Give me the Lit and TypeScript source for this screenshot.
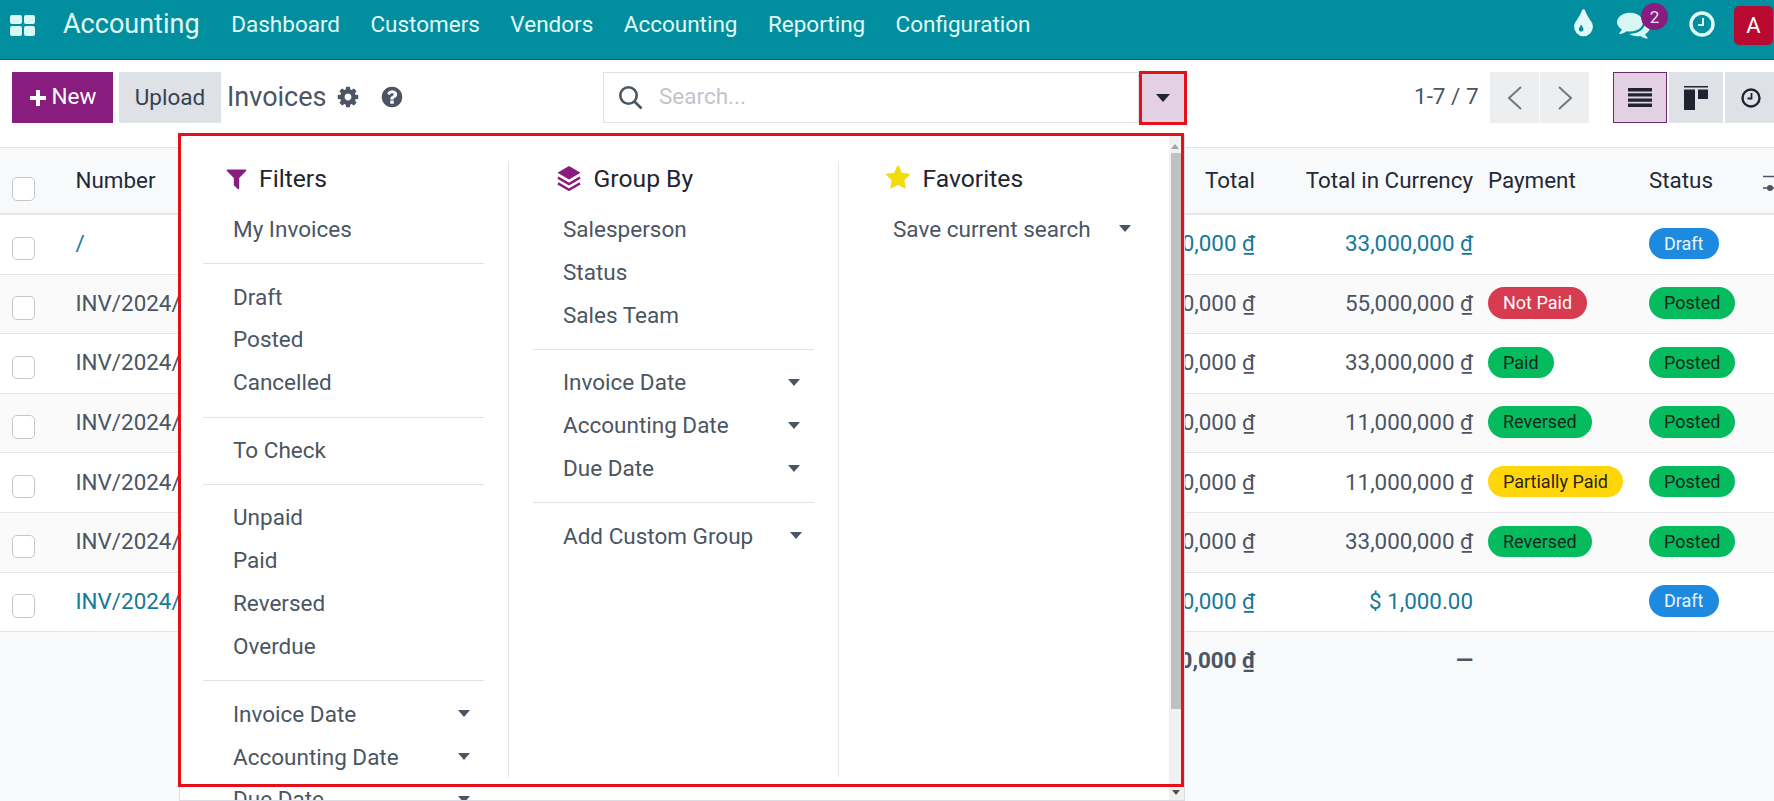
import { LitElement, html, css } from "lit";
import { customElement } from "lit/decorators.js";

const FA = (d: string, cls: string, box = "0 0 1792 1792") =>
  html`<svg class=${cls} viewBox=${box} fill="currentColor"><path d=${d}></path></svg>`;

const GEAR = "M1152 896q0-106-75-181t-181-75-181 75-75 181 75 181 181 75 181-75 75-181zm512-109v222q0 12-8 23t-20 13l-185 28q-19 54-39 91 35 50 107 138 10 12 10 25t-9 23q-27 37-99 108t-94 71q-12 0-26-9l-138-108q-44 23-91 38-16 136-29 186-7 28-36 28h-222q-14 0-24.5-8.5t-11.5-21.5l-28-184q-49-16-90-37l-141 107q-10 9-25 9-14 0-25-11-126-114-165-168-7-10-7-23 0-12 8-23 15-21 51-66.5t54-70.5q-27-50-41-99l-183-27q-13-2-21-12.5t-8-23.5v-222q0-12 8-23t19-13l186-28q14-46 39-92-40-57-107-138-10-12-10-24 0-10 9-23 26-36 98.5-107.5t94.5-71.5q13 0 26 10l138 107q44-23 91-38 16-136 29-186 7-28 36-28h222q14 0 24.5 8.5t11.5 21.5l28 184q49 16 90 37l142-107q9-9 24-9 13 0 25 10 129 119 165 170 7 8 7 22 0 12-8 23-15 21-51 66.5t-54 70.5q26 50 41 98l183 28q13 2 21 12.5t8 23.5z";
const QUESTION = "M1024 1376v-192q0-14-9-23t-23-9h-192q-14 0-23 9t-9 23v192q0 14 9 23t23 9h192q14 0 23-9t9-23zm256-672q0-88-55.5-163t-138.5-116-170-41q-243 0-371 213-15 24 8 42l132 100q7 6 19 6 16 0 25-12 53-68 86-92 34-24 86-24 48 0 85.5 26t37.5 59q0 38-20 61t-68 45q-63 28-115.5 86.5t-52.5 125.5v36q0 14 9 23t23 9h192q14 0 23-9t9-23q0-19 21.5-49.5t54.5-49.5q32-18 49-28.5t46-35 44.5-48 28-60.5 12.5-81zm384 192q0 209-103 385.5t-279.5 279.5-385.5 103-385.5-103-279.5-279.5-103-385.5 103-385.5 279.5-279.5 385.5-103 385.5 103 279.5 279.5 103 385.5z";
const FILTER = "M1595 295q17 41-14 70l-493 493v742q0 42-39 59-13 5-25 5-27 0-45-19l-256-256q-19-19-19-45v-486l-493-493q-31-29-14-70 17-39 59-39h1280q42 0 59 39z";
const STAR = "M1728 647q0 22-26 48l-363 354 86 500q1 7 1 20 0 21-10.5 35.5t-30.5 14.5q-19 0-40-12l-449-236-449 236q-22 12-40 12-21 0-31.5-14.5t-10.5-35.5q0-6 2-20l86-500-364-354q-25-27-25-48 0-37 56-46l502-73 225-455q19-41 49-41t49 41l225 455 502 73q56 9 56 46z";
const TINT = "M896 1152q0-36-20-69-1-1-15.5-22.5t-25.5-38-25-44-21-50.5q-4-16-21-16t-21 16q-7 23-21 50.5t-25 44-25.5 38-15.5 22.5q-20 33-20 69 0 53 37.5 90.5t90.5 37.5 90.5-37.5 37.5-90.5zm512-128q0 212-150 362t-362 150-362-150-150-362q0-145 81-275 6-9 62.5-90.5t101-151 99.5-178 83-201.5q9-30 34-47t51-17 51.5 17 33.5 47q28 93 83 201.5t99.5 178 101 151 62.5 90.5q81 127 81 275z";
const COMMENTS = "M1408 768q0 139-94 257t-256.5 186.5-353.5 68.5q-86 0-176-16-124 88-278 128-36 9-86 16h-3q-11 0-20.5-8t-11.5-21q-1-3-1-6.5t.5-6.5 2-6l2.5-5 3.5-5.5 4-5 4.5-5 4-4.5q5-6 23-25t26-29.5 22.5-29 25-38.5 20.5-44q-124-72-195-177t-71-224q0-139 94-257t256.5-186.5 353.5-68.5 353.5 68.5 256.5 186.5 94 257zm384 256q0 120-71 224.5t-195 176.5q10 24 20.5 44t25 38.5 22.5 29 26 29.5 23 25q1 1 4 4.5t4.500 5 4 5 3.5 5.500l2.5 5 2 6 .5 6.500-1 6.500q-3 14-13 22t-22 7q-50-7-86-16-154-40-278-128-90 16-176 16-271 0-472-132 58 4 88 4 161 0 309-45t264-129q125-92 192-212t67-254q0-77-23-152 129 71 204 178t75 230z";

type Row = { num: string; total: string; cur: string; pay?: [string, string]; status: [string, string]; link?: boolean };
const ROWS: Row[] = [
  { num: "/", total: "33,000,000 ₫", cur: "33,000,000 ₫", status: ["Draft", "blue"], link: true },
  { num: "INV/2024/00006", total: "55,000,000 ₫", cur: "55,000,000 ₫", pay: ["Not Paid", "red"], status: ["Posted", "green"] },
  { num: "INV/2024/00005", total: "33,000,000 ₫", cur: "33,000,000 ₫", pay: ["Paid", "green"], status: ["Posted", "green"] },
  { num: "INV/2024/00004", total: "11,000,000 ₫", cur: "11,000,000 ₫", pay: ["Reversed", "green"], status: ["Posted", "green"] },
  { num: "INV/2024/00003", total: "11,000,000 ₫", cur: "11,000,000 ₫", pay: ["Partially Paid", "yellow"], status: ["Posted", "green"] },
  { num: "INV/2024/00002", total: "33,000,000 ₫", cur: "33,000,000 ₫", pay: ["Reversed", "green"], status: ["Posted", "green"] },
  { num: "INV/2024/00001", total: "25,000,000 ₫", cur: "$ 1,000.00", status: ["Draft", "blue"], link: true },
];

type Item = { t: string; caret?: boolean } | null;
const FILTERS: Item[] = [
  { t: "My Invoices" }, null, { t: "Draft" }, { t: "Posted" }, { t: "Cancelled" }, null, { t: "To Check" }, null,
  { t: "Unpaid" }, { t: "Paid" }, { t: "Reversed" }, { t: "Overdue" }, null,
  { t: "Invoice Date", caret: true }, { t: "Accounting Date", caret: true }, { t: "Due Date", caret: true },
];
const GROUPS: Item[] = [
  { t: "Salesperson" }, { t: "Status" }, { t: "Sales Team" }, null,
  { t: "Invoice Date", caret: true }, { t: "Accounting Date", caret: true }, { t: "Due Date", caret: true }, null,
  { t: "Add Custom Group", caret: true },
];
const FAVS: Item[] = [{ t: "Save current search", caret: true }];

@customElement("app-root")
export class AppRoot extends LitElement {
  static styles = css`
    :host { display: block; position: relative; width: 1774px; height: 801px; overflow: hidden; background: #f8f9fb;
      font-family: Roboto, "Liberation Sans", sans-serif; font-size: 22.5px; color: #4b5563; }
    svg { display: block; flex: none; }

    .nav { height: 48px; padding-bottom: 11px; border-bottom: 1px solid #05626d; background: #018e9e; display: flex; align-items: center; color: #e2faf7; }
    .apps { display: grid; grid-template-columns: 11.5px 11.5px; gap: 2px; margin: 0 0 -2px 10px; }
    .apps i { height: 9.5px; background: #d9f7f5; border-radius: 2px; }
    .brand { font-size: 27px; margin: 0 16.5px 0 28px; }
    .menu { padding: 0 15.2px; }
    .sys { margin-left: auto; display: flex; align-items: center; position: relative; height: 59px; margin-bottom: -11px; width: 198px; }
    .tint { width: 33px; height: 33px; position: absolute; left: -9px; top: 8px; color: #e2faf7; }
    .chat { width: 33px; height: 33px; position: absolute; left: 41px; top: 8px; color: #d9f7f5; }
    .badge { position: absolute; left: 65px; top: 3px; width: 27px; height: 27px; border-radius: 50%; background: #881c7f;
      color: #e9dff0; font-size: 17px; display: flex; align-items: center; justify-content: center; }
    .nclock { width: 26px; height: 26px; position: absolute; left: 113px; top: 11px; color: #e2faf7; }
    .avatar { position: absolute; left: 158px; top: 6px; width: 39px; height: 39px; background: #b80a31; border-radius: 5px;
      color: #fff; font-size: 22px; display: flex; align-items: center; justify-content: center; }

    .cp { height: 87px; box-sizing: border-box; background: #fff; display: grid; grid-template-columns: 603px 583px 1fr; padding-top: 12px; }
    .cp-left { display: flex; align-items: flex-start; padding-left: 12px; }
    .btn { height: 51px; display: flex; align-items: center; justify-content: center; box-sizing: border-box; }
    .new { width: 101px; background: #881c7f; color: #fff; gap: 5px; }
    .new span { margin-bottom: 3px; }
    .plus { width: 18px; height: 18px; }
    .upload { width: 102px; background: #dee2e6; color: #374151; margin-left: 6px; padding-bottom: 2px; }
    .title { font-size: 27px; color: #4b5563; margin-left: 6px; height: 51px; line-height: 50px; }
    .gear { width: 24px; height: 24px; margin: 13px 0 0 10px; color: #4b5563; }
    .help { width: 24px; height: 24px; margin: 13px 0 0 20px; color: #4b5563; }

    .search { display: flex; height: 51px; }
    .sbox { flex: 1; border: 1px solid #dee2e6; display: flex; align-items: center; box-sizing: border-box; color: #c0c5cc; }
    .sbox span { margin-bottom: 3px; }
    .sicon { width: 25px; height: 25px; margin: 0 16px 0 14px; color: #4b5563; }
    .sbtn { width: 47px; background: #e3d0e2; display: flex; align-items: center; justify-content: center; }

    .caret { width: 0; height: 0; border-left: 6px solid transparent; border-right: 6px solid transparent; border-top: 7px solid #4b5563; flex: none; }
    .caret.big { border-left-width: 7px; border-right-width: 7px; border-top: 8px solid #1f2430; }

    .cp-right { display: flex; align-items: flex-start; padding-left: 228px; white-space: nowrap; }
    .pager { width: 76px; height: 51px; line-height: 49px; flex: none; }
    .pbtn { width: 49px; height: 51px; background: #eceef0; display: flex; align-items: center; justify-content: center; flex: none; color: #777; }
    .pbtn + .pbtn { margin-left: 1px; }
    .vbtn { width: 54px; height: 51px; background: #dee2e6; display: flex; align-items: center; justify-content: center; box-sizing: border-box; flex: none; margin-left: 2px; color: #1f2430; }
    .vbtn.on { background: #e3d0e2; border: 1px solid #6b2a6a; margin-left: 24px; }
    .vbtn.clock { justify-content: flex-start; padding-left: 16px; }

    .thead, .row, .tfoot { display: grid; grid-template-columns: 75.5px 1fr 155.5px 218px 161px 140px; align-items: center; font-size: 22.4px; }
    .thead { height: 68px; box-sizing: border-box; border-top: 1px solid #e1e4e8; border-bottom: 2px solid #e5e7eb; background: #f8f9fb; color: #1f2937; padding-bottom: 2px; }
    .row { height: 59.6px; box-sizing: border-box; border-bottom: 1px solid #e3e5e8; background: #fff; padding-bottom: 2px; }
    .row.alt { background: #fafafa; }
    .row.link { color: #15799a; }
    .tfoot { height: 58px; font-weight: 700; padding-bottom: 2px; box-sizing: border-box; }
    .cb { width: 23.5px; height: 23.5px; border: 1px solid #c3c7cc; border-radius: 5px; background: #fff; box-sizing: border-box; margin: 10px 0 0 11.5px; }
    .thead .cb { margin-top: 18.5px; }
    .r { text-align: right; white-space: nowrap; }
    .pad { padding-left: 15px; }
    .adjust { position: absolute; left: 1762px; top: 175px; width: 14px; height: 18px; color: #4b5563; }
    .pill { display: inline-block; height: 31.5px; line-height: 31px; padding: 0 15px; border-radius: 16px; font-size: 18px; white-space: nowrap; vertical-align: middle; }
    .pill.blue { background: #1d8ae0; color: #e9f6ff; }
    .pill.green { background: #04bc5e; color: #14281b; }
    .pill.red { background: #d63b50; color: #fff; }
    .pill.yellow { background: #ffd60a; color: #2a2410; }

    .panel { position: absolute; left: 179px; top: 135px; width: 1006px; height: 666px; box-sizing: border-box; background: #fff;
      border: 1px solid #d9dce0; display: flex; overflow: hidden; }
    .cols { flex: 1; display: flex; padding-top: 25px; min-width: 0; }
    .col { box-sizing: border-box; flex: none; height: 616px; padding: 0 24px 0 23.5px; }
    .col.w1 { width: 329px; border-right: 1px solid #e3e5e8; padding-left: 22.5px; }
    .col.w2 { width: 330px; border-right: 1px solid #e3e5e8; }
    .col.w2 .item:last-child { padding-right: 12.5px; }
    .col.w3 { flex: 1; padding-right: 24px; }
    .ctitle { height: 36px; margin-bottom: 11.5px; padding-bottom: 2px; box-sizing: border-box; display: flex; align-items: center; font-size: 24.7px; color: #1f2430; }
    .ic-f { width: 25px; height: 25px; color: #881c7f; margin: 0 10.5px 0 21px; }
    .ic-g { width: 24px; height: 25px; color: #881c7f; margin: 0 13px 0 24px; }
    .ic-s { width: 26px; height: 26px; color: #f2dc0c; margin: 0 11.5px 0 22.5px; }
    .item { height: 42.9px; box-sizing: border-box; padding: 0 14px 2px 30.5px; display: flex; align-items: center; justify-content: space-between; white-space: nowrap; color: #4b5563; }
    .hr { height: 1px; background: #e1e3e6; margin: 11.85px 0; }

    .sb { width: 15px; flex: none; background: #f1f1f1; display: flex; flex-direction: column; align-items: flex-start; position: relative; }
    .sb-up { height: 17px; width: 12px; display: flex; align-items: center; justify-content: center; padding-top: 4px; box-sizing: border-box; }
    .tri-up { width: 0; height: 0; border-left: 4px solid transparent; border-right: 4px solid transparent; border-bottom: 5px solid #a3a3a3; }
    .sb-thumb { width: 10px; height: 556px; margin-left: 2px; background: #c1c1c1; }
    .tri-dn { position: absolute; left: 3px; top: 654px; width: 0; height: 0; border-left: 4px solid transparent; border-right: 4px solid transparent; border-top: 5px solid #505050; }

    .mark { position: absolute; border: 3px solid #e5101a; box-sizing: border-box; pointer-events: none; }
    .mark.a { left: 1138.5px; top: 71px; width: 48px; height: 54px; }
    .mark.b { left: 177.5px; top: 133px; width: 1006.5px; height: 654px; }
  `;

  private renderItems(items: Item[]) {
    return items.map((i) =>
      i === null
        ? html`<div class="hr"></div>`
        : html`<div class="item"><span>${i.t}</span>${i.caret ? html`<span class="caret"></span>` : ""}</div>`
    );
  }

  render() {
    return html`
      <div class="nav">
        <div class="apps"><i></i><i></i><i></i><i></i></div>
        <div class="brand">Accounting</div>
        ${["Dashboard", "Customers", "Vendors", "Accounting", "Reporting", "Configuration"].map((m) => html`<div class="menu">${m}</div>`)}
        <div class="sys">
          ${FA(TINT, "tint")}
          ${FA(COMMENTS, "chat")}
          <div class="badge">2</div>
          <svg class="nclock" viewBox="0 0 26 26" fill="none" stroke="currentColor">
            <circle cx="13" cy="13" r="11" stroke-width="3.4"></circle>
            <path d="M14 7v7H9" stroke-width="2"></path>
          </svg>
          <div class="avatar">A</div>
        </div>
      </div>

      <div class="cp">
        <div class="cp-left">
          <div class="btn new">
            <svg class="plus" viewBox="0 0 18 18" fill="currentColor"><path d="M7 1h4v6h6v4h-6v6H7v-6H1V7h6z"></path></svg>
            <span>New</span>
          </div>
          <div class="btn upload">Upload</div>
          <div class="title">Invoices</div>
          ${FA(GEAR, "gear")}
          ${FA(QUESTION, "help")}
        </div>
        <div class="search">
          <div class="sbox">
            <svg class="sicon" viewBox="0 0 25 25" fill="none" stroke="currentColor" stroke-width="2.6">
              <circle cx="10.5" cy="10.5" r="8.2"></circle><path d="M16.5 16.5l7 7"></path>
            </svg>
            <span>Search...</span>
          </div>
          <div class="sbtn"><span class="caret big"></span></div>
        </div>
        <div class="cp-right">
          <div class="pager">1-7 / 7</div>
          <div class="pbtn">
            <svg width="16" height="24" viewBox="0 0 16 24" fill="none" stroke="currentColor" stroke-width="2"><path d="M14 1L2 12l12 11"></path></svg>
          </div>
          <div class="pbtn">
            <svg width="16" height="24" viewBox="0 0 16 24" fill="none" stroke="currentColor" stroke-width="2"><path d="M2 1l12 11L2 23"></path></svg>
          </div>
          <div class="vbtn on">
            <svg width="24" height="19" viewBox="0 0 24 19" fill="currentColor"><path d="M0 0h24v3.400H0zM0 5.200h24v3.400H0zM0 10.400h24v3.400H0zM0 15.600h24V19H0z"></path></svg>
          </div>
          <div class="vbtn">
            <svg width="24" height="24" viewBox="0 0 24 24" fill="currentColor"><path d="M0 0h24v1.500H0zM0 3.500h11V24H0zM14 3.500h10V13H14z"></path></svg>
          </div>
          <div class="vbtn clock">
            <svg width="20" height="20" viewBox="0 0 20 20" fill="none" stroke="currentColor"><circle cx="10" cy="10" r="8.500" stroke-width="2.400"></circle><path d="M10.500 5v5.500H6.500" stroke-width="1.800"></path></svg>
          </div>
        </div>
      </div>

      <div class="thead">
        <div><div class="cb"></div></div>
        <div>Number</div>
        <div class="r">Total</div>
        <div class="r">Total in Currency</div>
        <div class="pad">Payment</div>
        <div class="pad">Status</div>
      </div>
      <svg class="adjust" viewBox="0 0 14 18" fill="none" stroke="currentColor" stroke-width="1.500">
        <path d="M1 1.500h13M1 13h13"></path><circle cx="8" cy="13" r="3" fill="currentColor" stroke="none"></circle>
      </svg>
      ${ROWS.map(
        (r, i) => html`
          <div class="row ${i % 2 ? "alt" : ""} ${r.link ? "link" : ""}">
            <div><div class="cb"></div></div>
            <div>${r.num}</div>
            <div class="r">${r.total}</div>
            <div class="r">${r.cur}</div>
            <div class="pad">${r.pay ? html`<span class="pill ${r.pay[1]}">${r.pay[0]}</span>` : ""}</div>
            <div class="pad"><span class="pill ${r.status[1]}">${r.status[0]}</span></div>
          </div>`
      )}
      <div class="tfoot">
        <div></div><div></div>
        <div class="r">201,000,000 ₫</div>
        <div class="r">—</div>
        <div></div><div></div>
      </div>

      <div class="panel">
        <div class="cols">
          <div class="col w1">
            <div class="ctitle">${FA(FILTER, "ic-f")}<span>Filters</span></div>
            ${this.renderItems(FILTERS)}
          </div>
          <div class="col w2">
            <div class="ctitle">
              <svg class="ic-g" viewBox="0 0 24 25" fill="currentColor">
                <path d="M12 0l11.500 6.800L12 13.600.5 6.800z"></path>
                <path d="M1 11.600l11 6.400 11-6.400" fill="none" stroke="currentColor" stroke-width="2.400"></path>
                <path d="M1 17.400l11 6.400 11-6.400" fill="none" stroke="currentColor" stroke-width="2.400"></path>
              </svg>
              <span>Group By</span>
            </div>
            ${this.renderItems(GROUPS)}
          </div>
          <div class="col w3">
            <div class="ctitle">${FA(STAR, "ic-s")}<span>Favorites</span></div>
            ${this.renderItems(FAVS)}
          </div>
        </div>
        <div class="sb">
          <div class="sb-up"><span class="tri-up"></span></div>
          <div class="sb-thumb"></div>
          <span class="tri-dn"></span>
        </div>
      </div>

      <div class="mark a"></div>
      <div class="mark b"></div>
    `;
  }
}
